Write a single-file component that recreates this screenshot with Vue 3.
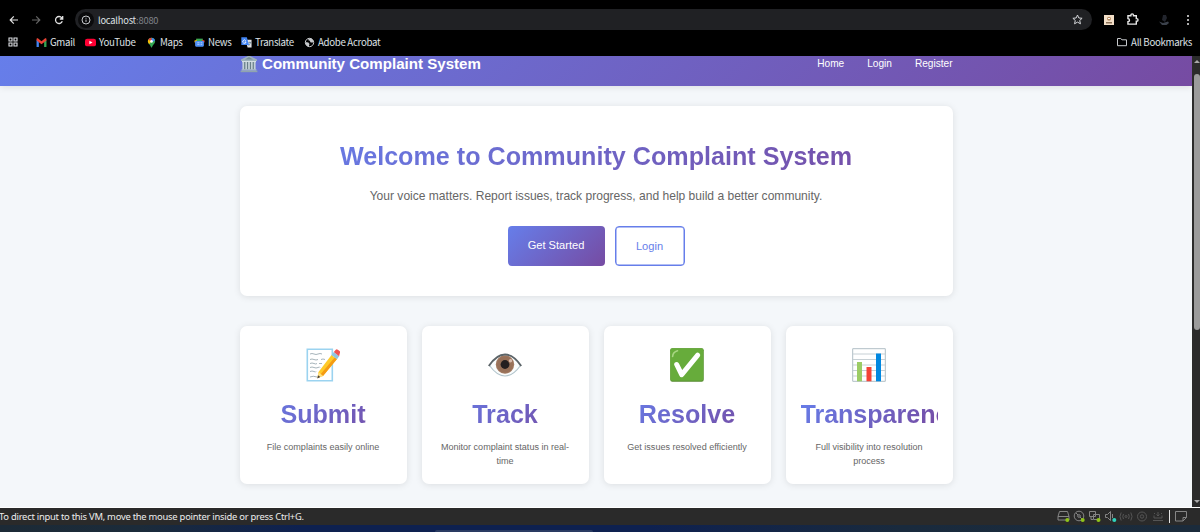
<template>
  <div class="screen">

    <!-- Browser chrome -->
    <div class="chrome">
      <div class="toolbar">
        <svg class="ic back" viewBox="0 0 10 10"><path d="M9 5H1.4M4.8 1.4 1.2 5l3.6 3.6" /></svg>
        <svg class="ic forward" viewBox="0 0 10 10"><path d="M1 5h7.6M5.2 1.4 8.8 5 5.2 8.6" /></svg>
        <svg class="ic reload" viewBox="0 0 10 10"><path d="M8.3 6.3A3.5 3.5 0 1 1 7.8 2.8L8.6 3.8M8.7 1v3H5.8" /></svg>
        <div class="address">
          <span class="info">
            <svg viewBox="0 0 10 10"><circle cx="5" cy="5" r="4" /><path d="M5 4.6v2.3M5 2.8v.9" /></svg>
          </span>
          <span class="url">localhost<em>:8080</em></span>
          <svg class="star" viewBox="0 0 10 10"><path d="m5 .9 1.2 2.7 3 .3L7 5.9l.7 3L5 7.4 2.3 8.9l.7-3L.8 3.9l3-.3z" /></svg>
        </div>
        <svg class="ext" viewBox="0 0 10 10"><path fill="#f3dfc8" d="M0 0h10v10H0z" /><circle cx="5" cy="3.8" r="2" fill="#b58c62" /><path fill="#8b7158" d="M2 7h6v1.5H2z" /><path fill="#fff" d="M4 3h2v1H4z" /></svg>
        <svg class="puzzle" viewBox="0 0 12 12"><path d="M1.8 2.6h2.7V2a1.2 1.2 0 0 1 2.4 0v.6h2.6v2.6h.4a1.2 1.2 0 0 1 0 2.4h-.4v2.7H1.8V8a1.4 1.4 0 0 0 0-2.800z" /></svg>
        <svg class="avatar" viewBox="0 0 12 12"><path fill="#22252d" d="M5 1h3l1 3-2 4-3-2z" /><path fill="#3b414b" d="M1 7.500 5 9l5-1.500 1 1.500-2.500 2H4z" /></svg>
        <svg class="dots" viewBox="0 0 4 12"><circle cx="2" cy="2" r="1" /><circle cx="2" cy="6" r="1" /><circle cx="2" cy="10" r="1" /></svg>
      </div>

      <div class="bookmarks">
        <svg class="apps" viewBox="0 0 10 10"><path d="M1 1h3v3H1zM6 1h3v3H6zM1 6h3v3H1zM6 6h3v3H6z" /></svg>
        <a class="bm gmail">
          <svg viewBox="0 0 10 10"><path fill="#4285f4" d="M.5 2.500 2.600 4v5H.5z" /><path fill="#34a853" d="M7.400 4l2.100-1.500V9H7.400z" /><path fill="#ea4335" d="M.5 2.200C.5 1 1.400 1 2.200 1.600L5 3.800l2.800-2.200c.8-.6 1.700-.6 1.700.6v1L5 6.500.5 3.200z" /></svg>
          Gmail
        </a>
        <a class="bm youtube">
          <svg viewBox="0 0 10 10"><rect y="1.5" width="10" height="7" rx="2" fill="#f03" /><path fill="#fff" d="m4 3.400 2.800 1.600L4 6.600z" /></svg>
          YouTube
        </a>
        <a class="bm maps">
          <svg viewBox="0 0 10 10"><path fill="#34a853" d="M1.700 4A3.300 3.300 0 0 1 8.300 4C8.300 6 6 7 5.300 9.600h-.6C4.200 7 1.700 6 1.700 4z" /><path fill="#4285f4" d="M5 .7A3.300 3.300 0 0 1 8.200 3L5 5z" /><path fill="#ea4335" d="M5 .7A3.300 3.300 0 0 0 2 2.500L4 4l1-1z" /><path fill="#fbbc04" d="M2 2.500C1.300 4 2 5.500 3 6.400L5 4z" /><circle cx="5" cy="4" r="1.2" fill="#fff" /></svg>
          Maps
        </a>
        <a class="bm news">
          <svg viewBox="0 0 10 10"><path fill="#34a853" d="M2 1.500h6v3H2z" /><path fill="#ea4335" d="m7 2.300 2.800 1L9 6z" /><path fill="#fbbc04" d="m3 2.300-2.800 1L1 6z" /><rect x="1" y="3.600" width="8" height="5.200" rx="1" fill="#4f8ff5" /><path d="M3 5.200h2M3 6.700h2M6 5.200h1.500M6 6.700h1.500" stroke="#dce8fd" stroke-width=".6" /></svg>
          News
        </a>
        <a class="bm translate">
          <svg viewBox="0 0 10 10"><path fill="#dfe1e5" d="M4 2.500h5.600v7H6z" /><path fill="#4285f4" d="M.3.3h5l2 7h-7z" /><path d="M4.300 3.300A1.500 1.500 0 1 0 4.600 4.500H3.400" fill="none" stroke="#fff" stroke-width=".8" /><path d="M6.800 5h2.400M8 4.200V5M7 8l1.800-3" fill="none" stroke="#607d8b" stroke-width=".6" /></svg>
          Translate
        </a>
        <a class="bm acrobat">
          <svg viewBox="0 0 10 10"><circle cx="5" cy="5" r="3.800" fill="none" stroke="#c7c9cc" stroke-width=".9" /><path fill="#c7c9cc" d="M1.300 4.500 4 5l1 1.300-.8 2.500L2 7.500zM4 1.400l2.800 0 1.700 1.800-.7 2-2-.5-.5-1.300L4 3z" /></svg>
          Adobe Acrobat
        </a>
        <a class="bm all">
          <svg viewBox="0 0 12 12"><path d="M1.500 2.500h3.200L6 3.800h4.500v5.900h-9z" fill="none" stroke="#c7c9cc" /></svg>
          All Bookmarks
        </a>
      </div>
    </div>

    <!-- Page -->
    <div class="viewport">
      <div class="page">
        <header class="header">
          <div class="container nav">
            <div class="brand">
              <svg viewBox="0 0 18 18">
                <path fill="#9fb3bd" d="M9 .5 17 4.600v1.500H1V4.600z" /><path fill="#78909c" d="M9 2.100 13 4.400H5z" />
                <path fill="#d5dfe3" d="M2 6h14v1.200H2z" />
                <path fill="#607781" d="M3 7h12v7.500H3z" />
                <path fill="#c3d0d6" d="M2.400 7h1.800v7.500H2.400zM5.300 7h1.800v7.500H5.300zM8.100 7h1.800v7.500H8.100zM10.900 7h1.800v7.500h-1.800zM13.800 7h1.800v7.500h-1.800z" />
                <path fill="#b6c5cc" d="M1.600 14.300h14.800v1.300H1.600z" /><path fill="#90a4ae" d="M.6 15.600h16.800v1.600H.6z" />
              </svg>
              <span>Community Complaint System</span>
            </div>
            <nav class="links">
              <a v-for="link in links" :key="link">{{ link }}</a>
            </nav>
          </div>
        </header>

        <main class="container">
          <section class="hero">
            <h1>Welcome to Community Complaint System</h1>
            <p>Your voice matters. Report issues, track progress, and help build a better community.</p>
            <div class="actions">
              <a class="btn btn-primary">Get Started</a>
              <a class="btn btn-outline">Login</a>
            </div>
          </section>

          <section class="features">
            <div class="feature" v-for="f in features" :key="f.icon">
              <svg v-if="f.icon === 'memo'" class="emoji" viewBox="0 0 34 34">
                <path fill="#fff" stroke="#9bd3f0" stroke-width="1.6" d="M1.300 1.300h25v31.400h-25z" />
                <path fill="none" stroke="#91a1aa" stroke-width=".8" d="M4 6q2-1 4 0t4 0 4 0M4 11.500q2-1 4 0t4 0M15 11.500q2-1 4 0M4 15.500q2-1 4 0t3 0M13 15.500h3M4 19.500q2-1 4 0t4 0 2 0M4 23.500q2-1 4 0t2 0M4 29q3-1.500 7 0" />
                <path fill="#ffca28" d="m25.500 7 5.500 4-14 17-5.500 2 1-6z" />
                <path fill="#f59b13" d="m28.600 9.400 2.400 1.600-14 17-2.400-1.800z" />
                <path fill="#ffe082" d="m12.500 24 4.500 4-5.500 2z" /><path fill="#453d3a" d="m12 27.300 2.300 1.800-3 1.300z" />
                <path fill="#8fc5df" d="m25.500 7 2.300-3 5.400 4.300-2.200 2.900z" />
                <path fill="#ef5350" d="m27.800 4 2-2.300q.9-.8 2 0l1.800 1.400q1 1 .2 2.200l-.7 3z" />
              </svg>
              <svg v-else-if="f.icon === 'eye'" class="emoji" viewBox="0 0 34 34">
                <path fill="#fafcfc" d="M1 17Q9 6.500 17 6.500T33 17Q25 28 17 28T1 17z" />
                <circle cx="17" cy="16.500" r="9.200" fill="#a1785f" />
                <circle cx="17" cy="16.500" r="8" fill="#8d6751" opacity=".5" />
                <circle cx="17" cy="16.500" r="4.400" fill="#241f20" />
                <circle cx="22.500" cy="12.700" r="1.700" fill="#d8bcae" />
                <path fill="none" stroke="#b2c4cb" stroke-width="1.200" d="M1.500 17.500Q9 28 17 28t15.500-10.500" />
                <path fill="none" stroke="#5c6468" stroke-width="1.900" d="M.8 18Q8.500 6.500 17 6.500T33.200 18" />
              </svg>
              <svg v-else-if="f.icon === 'check'" class="emoji" viewBox="0 0 34 34">
                <rect x=".3" y=".3" width="33.400" height="33.400" rx="2" fill="#558b2f" />
                <rect x=".3" y=".3" width="33" height="32.400" rx="2" fill="#67ac3b" />
                <path fill="none" stroke="#a8d683" stroke-width="1.600" stroke-linecap="round" d="M2.600 8.500Q3 4 7.500 2.800" />
                <path fill="none" stroke="#fff" stroke-width="5" stroke-linecap="round" stroke-linejoin="round" d="m6.700 16.500 5 10.200 16-19.500" />
              </svg>
              <svg v-else class="emoji" viewBox="0 0 34 34">
                <path fill="#fff" stroke="#b0bec5" d="M.7.7h32.600v32.600H.7z" />
                <path stroke="#c7d0d5" stroke-width="1" d="M1 6h32M1 11.500h32M1 17h32M1 22.500h32M1 28h32" />
                <path fill="#9ccc65" d="M5 14h5v19.300H5z" /><path fill="#f44336" d="M14.500 19h5v14.300h-5z" /><path fill="#0288e0" d="M24 5.500h5v27.800h-5z" />
              </svg>
              <h2>{{ f.title }}</h2>
              <p>{{ f.text }}</p>
            </div>
          </section>
        </main>
      </div>

      <div class="scrollbar">
        <i class="arrow up"></i>
        <i class="thumb"></i>
        <i class="arrow down"></i>
      </div>
    </div>

    <!-- VM status bar -->
    <div class="status">
      <span class="hint">To direct input to this VM, move the mouse pointer inside or press Ctrl+G.</span>
      <svg class="devices" viewBox="0 0 135 16">
        <g fill="none" stroke="#858585" stroke-width="1">
          <path d="M3.500 3.500h8l1.500 5v3.500H2V8.500zM2 8.500h11" />
          <circle cx="23" cy="8" r="4.800" /><circle cx="23" cy="8" r="1.300" /><path d="m20 5 2 2M24 9l2 2" />
          <path d="M33.500 3.500h6v5h-6zM37.500 6.500h6v5h-6zM35 8.500v3h2" />
          <path d="M49.500 6.500h2l3-3v9l-3-3h-2zM56.500 6v4" />
        </g>
        <g fill="none" stroke="#555" stroke-width="1">
          <circle cx="70" cy="8.500" r="1" /><path d="M67.500 6q-1.500 2.500 0 5M72.500 6q1.500 2.500 0 5M65.200 4.500q-2.500 4 0 8M74.800 4.500q2.500 4 0 8" />
          <circle cx="86" cy="8.500" r="4.500" /><circle cx="86" cy="8.500" r="1.700" />
          <path d="M97 12.500h10M98 10V7.500M106 10V7.500M98 10h8M102 8V4M100.500 6.500 102 8l1.500-1.500M98 5l1 1M106 5l-1 1" />
        </g>
        <g fill="#8fc31a"><circle cx="11.300" cy="12" r="2" /><circle cx="26.700" cy="12" r="2" /><circle cx="42.500" cy="12" r="2" /></g>
        <circle cx="58.300" cy="12" r="2" fill="#2fd3bd" />
        <path stroke="#e6e6e6" d="M113.500 2v13" />
        <path fill="none" stroke="#858585" d="M119.500 3.500h11v6l-3.500 3.500h-7.500zM130.500 9.500H127V13" />
      </svg>
    </div>
    <div class="taskbar"><span></span></div>
  </div>
</template>

<script setup>
const links = ['Home', 'Login', 'Register']

const features = [
  { icon: 'memo', title: 'Submit', text: 'File complaints easily online' },
  { icon: 'eye', title: 'Track', text: 'Monitor complaint status in real-time' },
  { icon: 'check', title: 'Resolve', text: 'Get issues resolved efficiently' },
  { icon: 'chart', title: 'Transparency', text: 'Full visibility into resolution process' },
]
</script>

<style>
body { margin: 0; overflow: hidden; background: #000; }
</style>

<style scoped>
* { box-sizing: border-box; }
.screen {
  width: 1200px; height: 532px;
  display: flex; flex-direction: column;
  overflow: hidden;
  font-family: "Liberation Sans", Arial, sans-serif;
}

/* Browser chrome */
.chrome {
  height: 56px; flex-shrink: 0;
  background: #000; color: #dfe1e5;
  font-family: "Noto Sans CJK SC", "Noto Sans", sans-serif;
}
.toolbar {
  height: 30px; padding: 9px 9px 0 9px;
  display: flex; align-items: center;
}
.ic { width: 10px; height: 10px; fill: none; stroke: #e3e3e3; stroke-width: 1.2; flex-shrink: 0; }
.forward { margin-left: 12px; stroke: #666; }
.reload { margin-left: 13px; stroke-width: 1.3; }
.address {
  width: 1017px; height: 21px; margin-left: 11px;
  border-radius: 11px; background: #202124;
  display: flex; align-items: center;
  padding: 0 9px 0 3px;
  flex-shrink: 0;
}
.info {
  width: 16px; height: 16px; border-radius: 50%;
  background: #0b0b0c;
  display: flex; align-items: center; justify-content: center;
}
.info svg { width: 10px; height: 10px; fill: none; stroke: #dadce0; stroke-width: 0.9; }
.url { margin-left: 4px; font-size: 9.3px; line-height: 20px; letter-spacing: -0.2px; }
.url em { font-style: normal; color: #80848a; }
.star { width: 11px; height: 11px; margin-left: auto; fill: none; stroke: #d5d7da; stroke-width: 0.9; }
.ext { width: 10px; height: 10px; margin-left: 12px; }
.puzzle { width: 13px; height: 13px; margin-left: 12px; fill: none; stroke: #e8e8e8; stroke-width: 1.3; }
.avatar { width: 12px; height: 12px; margin-left: 19px; }
.dots { width: 4px; height: 12px; margin-left: 16px; fill: #e8e8e8; }

.bookmarks {
  height: 26px; padding: 0 8px 2px;
  display: flex; align-items: center;
  font-size: 9.7px; line-height: 14px; letter-spacing: -0.32px;
}
.apps { width: 10px; height: 10px; fill: none; stroke: #dfe1e5; stroke-width: 1.1; }
.bm { display: flex; align-items: center; white-space: nowrap; }
.bm svg { width: 11px; height: 11px; margin-right: 3px; flex-shrink: 0; }
.gmail { width: 49px; margin-left: 18px; }
.youtube { width: 61px; }
.maps { width: 48px; }
.news { width: 47px; }
.translate { width: 63px; }
.all { margin-left: auto; }
.all svg { width: 12px; height: 12px; }

/* Page */
.viewport { height: 452px; flex-shrink: 0; display: flex; background: #f4f7fa; border-bottom: 1px solid #fff; }
.page { width: 1192px; overflow: hidden; }
.container { width: 713px; margin: 0 auto; }
.header {
  height: 30px;
  background: linear-gradient(135deg, #667eea, #764ba2);
  box-shadow: 0 1px 7px rgba(0, 0, 0, 0.1);
}
.nav { display: flex; justify-content: space-between; color: #fff; }
.brand { display: flex; align-items: center; height: 16px; font-size: 15.1px; line-height: 16px; font-weight: 700; }
.brand svg { width: 18px; height: 18px; margin-right: 4.5px; }
.brand span { padding-bottom: 1px; }
.links { display: flex; gap: 23px; font-size: 10.1px; line-height: 16px; }

.hero, .feature { background: #fff; border-radius: 7px; box-shadow: 0 1px 7px rgba(0, 0, 0, 0.1); }
.hero { height: 190px; margin-top: 20px; padding: 34px 30px 0; text-align: center; }
h1, h2 {
  margin: 0;
  font-size: 25.15px; line-height: 32px; font-weight: 700;
  background: linear-gradient(135deg, #667eea, #764ba2);
  -webkit-background-clip: text; background-clip: text;
  color: transparent;
}
.hero p { margin: 16px 0 0; font-size: 12.05px; line-height: 16px; color: #666; }
.actions { display: flex; justify-content: center; gap: 10px; margin-top: 22px; }
.btn { height: 40px; border-radius: 4px; font-size: 11.1px; text-align: center; }
.btn-primary { width: 97px; line-height: 38px; color: #fff; background: linear-gradient(135deg, #667eea, #764ba2); }
.btn-outline { width: 70px; line-height: 38px; color: #667eea; border: 1px solid #667eea; box-shadow: inset 0 0 0 0.5px #667eea; }

.features { display: grid; grid-template-columns: repeat(4, 1fr); gap: 15px; margin-top: 30px; }
.feature { height: 158px; min-width: 0; padding: 22px 15px 0; text-align: center; }
.emoji { display: block; width: 34px; height: 34px; margin: 0 auto; }
.feature h2 { margin-top: 16px; }
.feature:last-child h2 { text-align: left; letter-spacing: -0.06px; }
.feature p { margin: 10px 0 0; font-size: 9.05px; line-height: 14.4px; color: #666; }

.scrollbar {
  width: 8px; flex-shrink: 0; padding-left: 1px;
  background: #2b2b2b;
  display: flex; flex-direction: column; align-items: center;
}
.arrow { border: 3px solid transparent; }
.up { border-top: 0; border-bottom: 3px solid #aaa; margin-top: 4px; }
.down { border-bottom: 0; border-top: 3px solid #aaa; margin: auto 0 4px; }
.thumb { width: 6px; height: 256px; margin-top: 11px; border-radius: 3px; background: #9b9b9b; }

/* Status bar */
.status {
  height: 17px; flex-shrink: 0;
  background: #2a2a2a; color: #ededed;
  display: flex; justify-content: space-between;
  overflow: hidden;
}
.hint { font: 9.4px/17px "Noto Sans", sans-serif; letter-spacing: -0.24px; margin-left: -1px; white-space: nowrap; }
.devices { width: 135px; height: 16px; margin-right: 9px; }
.taskbar { flex: 1; background: linear-gradient(90deg, #1c2a36 0, #1b2b3a 140px, #0e2150 300px, #0e2150 650px, #192a3d 900px, #1b2b3b); }
.taskbar span { display: block; width: 158px; height: 2px; margin: 5px 0 0 435px; border-radius: 2px 2px 0 0; background: #2a3b62; }
</style>
